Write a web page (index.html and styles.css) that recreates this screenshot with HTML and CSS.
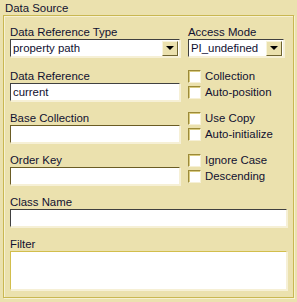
FILE: index.html
```html
<!DOCTYPE html>
<html lang="en">
<head>
    <meta charset="UTF-8">
    <title>Data Source</title>
    <link rel="stylesheet" href="styles.css">
</head>
<body>

    <div class="panel">
        <div class="title">Data Source</div>
        <div class="group">
            <div class="grid">
                <div class="field top">
                    <label>Data Reference Type</label>
                    <div class="select">
                        <span class="value">property path</span>
                        <span class="arrow"></span>
                    </div>
                </div>
                <div class="field top">
                    <label>Access Mode</label>
                    <div class="select narrow">
                        <span class="value">PI_undefined</span>
                        <span class="arrow"></span>
                    </div>
                </div>

                <div class="field">
                    <label>Data Reference</label>
                    <div class="input dark">current</div>
                </div>
                <div class="checks">
                    <div class="check"><span class="tick"></span>Collection</div>
                    <div class="check"><span class="tick"></span>Auto-position</div>
                </div>

                <div class="field">
                    <label>Base Collection</label>
                    <div class="input olive"></div>
                </div>
                <div class="checks">
                    <div class="check"><span class="tick"></span>Use Copy</div>
                    <div class="check"><span class="tick"></span>Auto-initialize</div>
                </div>

                <div class="field">
                    <label>Order Key</label>
                    <div class="input olive"></div>
                </div>
                <div class="checks">
                    <div class="check"><span class="tick"></span>Ignore Case</div>
                    <div class="check"><span class="tick"></span>Descending</div>
                </div>

                <div class="field wide">
                    <label>Class Name</label>
                    <div class="input dark"></div>
                </div>

                <div class="field wide">
                    <label>Filter</label>
                    <div class="input textarea"></div>
                </div>
            </div>
        </div>
    </div>

</body>
</html>
```

FILE: styles.css
```css
* {
    margin: 0;
    padding: 0;
    box-sizing: border-box;
}

body {
    background: #ebe1ae;
    font-family: "Liberation Sans", Arial, sans-serif;
    font-size: 11.4px;
    color: #101030;
}

.panel {
    width: 297px;
    height: 302px;
    padding: 2px 0 0 3px;
}

.title {
    line-height: 13px;
    height: 13px;
    padding-left: 2px;
}

.group {
    width: 291px;
    height: 283px;
    border: 1px solid #c9b752;
    box-shadow: inset 1px 1px 0 #f7f1d2, 1px 1px 0 #f7f1d2;
    padding: 10px 5px 0 6px;
}

.grid {
    display: grid;
    grid-template-columns: 170px 99px;
    column-gap: 8px;
    row-gap: 11px;
}

.field.top {
    margin-bottom: 2px;
}

.field label {
    display: block;
    line-height: 13px;
    height: 13px;
}

.field.wide {
    grid-column: 1 / 3;
}

.input,
.select {
    height: 18px;
    background: #fff;
    border: 1px solid;
    border-color: #404040 #f6f0d6 #f6f0d6 #404040;
    box-shadow: 1px 1px 0 #f6f0d6;
    line-height: 16px;
    padding-left: 2px;
}

.input.olive {
    border-color: #6a5c24 #f6f0d6 #f6f0d6 #6a5c24;
}

.textarea {
    height: 39px;
    border-color: #d2be4c #f6f0d6 #f6f0d6 #d2be4c;
}

.select {
    display: flex;
    align-items: center;
    padding: 0 0 0 2px;
}

.select.narrow {
    width: 96px;
}

.select .value {
    flex: 1;
}

.select .arrow {
    width: 16px;
    height: 15px;
    margin-right: 1px;
    background: #ebe1ae;
    border: 1px solid;
    border-color: #f8f4dc #6e6330 #6e6330 #f8f4dc;
    display: flex;
    align-items: center;
    justify-content: center;
}

.select .arrow::after {
    content: "";
    border-left: 4px solid transparent;
    border-right: 4px solid transparent;
    border-top: 4px solid #000;
}

.checks {
    display: flex;
    flex-direction: column;
    gap: 3px;
    height: 31px;
}

.check {
    display: flex;
    align-items: center;
    gap: 4px;
    height: 13px;
    line-height: 13px;
}

.tick {
    width: 13px;
    height: 13px;
    background: #fff;
    border: 1px solid;
    border-color: #9c8a38 #f6f0d6 #f6f0d6 #9c8a38;
    box-shadow: inset 1px 1px 0 #d8ca80;
}
```
